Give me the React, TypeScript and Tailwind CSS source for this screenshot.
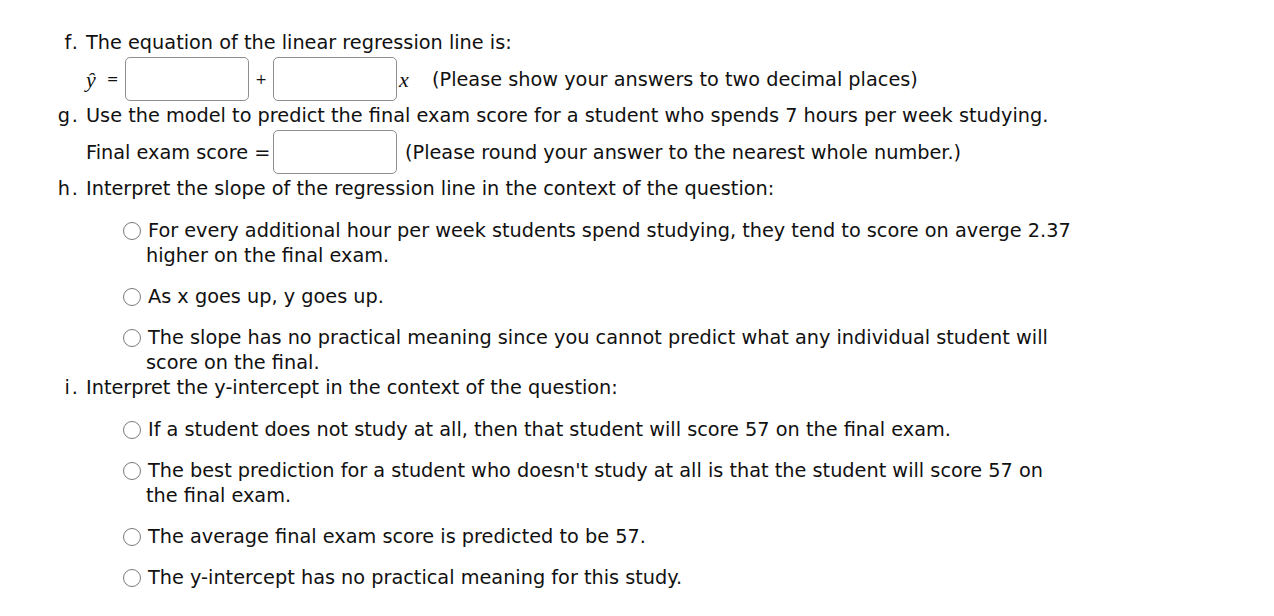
import React from "react";

function Radio() {
  return (
    <span className="inline-block w-[18px] h-[18px] rounded-full border border-[#7a7a7a] bg-white mr-[7px] align-[-3px]" />
  );
}

function Option({ lines, first }: { lines: string[]; first?: boolean }) {
  return (
    <div className={`ml-[37px] pl-[23px] -indent-[23px] whitespace-nowrap ${first ? "mt-[17px]" : "mt-[16px]"}`}>
      <Radio />
      {lines.map((l, i) => (
        <React.Fragment key={i}>
          {i > 0 && <br />}
          {l}
        </React.Fragment>
      ))}
    </div>
  );
}

function Item({ label, children }: { label: string; children: React.ReactNode }) {
  return (
    <div className="flex">
      <div className="w-[26px] shrink-0 text-right tracking-[2px]">{label}</div>
      <div className="ml-[6px] flex-1">{children}</div>
    </div>
  );
}

function Box({ className = "" }: { className?: string }) {
  return <div className={`w-[124px] h-[44px] rounded-[5px] border border-[#8e8e8e] bg-white shrink-0 ${className}`} />;
}

export default function App() {
  return (
    <div className="w-[1274px] h-[616px] bg-white overflow-hidden font-['DejaVu_Sans',sans-serif] text-[19.3px] leading-[25px] text-[#111]">
      <div className="pt-[30px] pl-[54px]">
        <Item label="f.">
          <div>The equation of the linear regression line is:</div>
          <div className="flex items-center h-[48px]">
            <span className="w-[18px] font-['Liberation_Serif',serif] italic text-[22px]">ŷ</span>
            <span className="w-[17px] text-center text-[14px]">=</span>
            <Box className="ml-[4px]" />
            <span className="w-[24px] text-center text-[14px]">+</span>
            <Box />
            <span className="w-[14px] pl-[2px] font-['Liberation_Serif',serif] italic text-[22px]">x</span>
            <span className="ml-[21px]">(Please show your answers to two decimal places)</span>
          </div>
        </Item>
        <Item label="g.">
          <div className="whitespace-nowrap">
            Use the model to predict the final exam score for a student who spends 7 hours per week studying.
          </div>
          <div className="flex items-center h-[48px]">
            <span className="w-[187px] whitespace-nowrap">Final exam score =</span>
            <Box />
            <span className="ml-[8px]">(Please round your answer to the nearest whole number.)</span>
          </div>
        </Item>
        <Item label="h.">
          <div>Interpret the slope of the regression line in the context of the question:</div>
          <Option
            first
            lines={[
              "For every additional hour per week students spend studying, they tend to score on averge 2.37",
              "higher on the final exam.",
            ]}
          />
          <Option lines={["As x goes up, y goes up."]} />
          <Option
            lines={[
              "The slope has no practical meaning since you cannot predict what any individual student will",
              "score on the final.",
            ]}
          />
        </Item>
        <Item label="i.">
          <div>Interpret the y-intercept in the context of the question:</div>
          <Option first lines={["If a student does not study at all, then that student will score 57 on the final exam."]} />
          <Option
            lines={[
              "The best prediction for a student who doesn't study at all is that the student will score 57 on",
              "the final exam.",
            ]}
          />
          <Option lines={["The average final exam score is predicted to be 57."]} />
          <Option lines={["The y-intercept has no practical meaning for this study."]} />
        </Item>
      </div>
    </div>
  );
}
